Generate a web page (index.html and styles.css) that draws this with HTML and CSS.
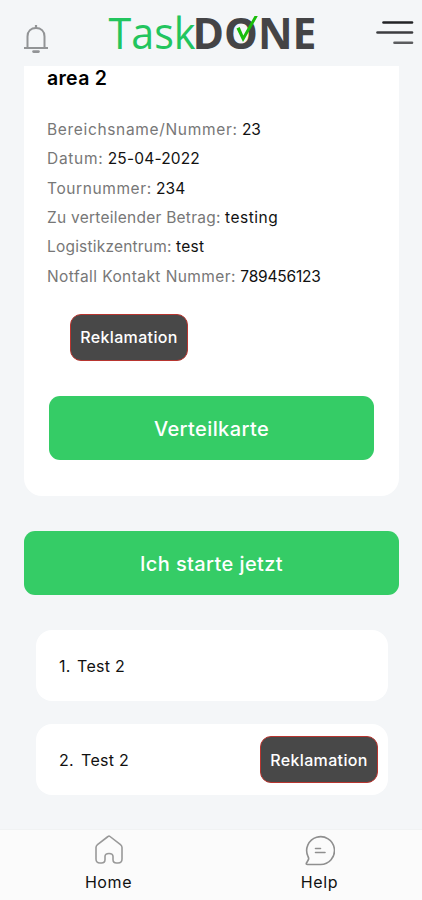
FILE: index.html
```html
<!DOCTYPE html>
<html lang="de">
<head>
  <meta charset="UTF-8" />
  <meta name="viewport" content="width=device-width, initial-scale=1.0">
  <title>TaskDONE</title>
  <link rel="stylesheet" href="styles.css">
</head>
<body>

  <header class="topbar">
    <svg class="bell" viewBox="0 0 26 30" fill="none" stroke="#929496" stroke-width="2">
      <path d="M4.500 23V12.500C4.500 7 8.200 4 13 4s8.500 3 8.500 8.500V23"/>
      <path d="M1 24h24M13 4V1" stroke-width="2.200"/>
      <path d="M10.500 27.600h5" stroke-width="2.600" stroke-linecap="round"/>
    </svg>
    <svg class="logo" viewBox="0 0 212 66">
      <text class="logo-task" x="0.500" y="48.500" textLength="87" lengthAdjust="spacingAndGlyphs">Task</text>
      <text class="logo-done" x="84.500" y="48.500" textLength="124" lengthAdjust="spacingAndGlyphs">DONE</text>
      <path d="M128.500 28.500l3.200-1.500 3.600 8.500L146.500 16h3.300L135 42z" fill="#19bd0b"/>
    </svg>
    <svg class="menu" viewBox="0 0 38 26" stroke-width="2.600" stroke-linecap="round">
      <path d="M7.500 2.500h28.500" stroke="#222326"/>
      <path d="M1.500 12.500h34.500" stroke="#3c3d40"/>
      <path d="M18.500 22.700h17.500" stroke="#5b5c5f"/>
    </svg>
  </header>

  <main>
    <section class="area-card">
      <h1>area 2</h1>
      <ul class="details">
        <li class="area"><span>Bereichsname/Nummer:</span> <b>23</b></li>
        <li class="date"><span>Datum:</span> <b>25-04-2022</b></li>
        <li class="tour"><span>Tournummer:</span> <b>234</b></li>
        <li class="amount"><span>Zu verteilender Betrag:</span> <b>testing</b></li>
        <li class="center"><span>Logistikzentrum:</span> <b>test</b></li>
        <li class="phone"><span>Notfall Kontakt Nummer:</span> <b>789456123</b></li>
      </ul>
      <button class="btn-dark">Reklamation</button>
      <button class="btn-green">Verteilkarte</button>
    </section>

    <button class="btn-green btn-start">Ich starte jetzt</button>

    <ol class="tours">
      <li><span class="num one">1.</span><span>Test 2</span></li>
      <li><span class="num">2.</span><span>Test 2</span><button class="btn-dark">Reklamation</button></li>
    </ol>
  </main>

  <nav class="tabbar">
    <a class="tab">
      <svg viewBox="0 0 30 32" fill="none" stroke="#999" stroke-width="1.600" stroke-linejoin="round">
        <path d="M14 2.500q1-.8 2 0l10.500 8.100q1.500 1.200 1.500 3V25q0 4-4 4h-1.500q-3.500 0-3.500-3.500v-3q0-3-4-3t-4 3v3Q11 29 7.500 29H6q-4 0-4-4V13.600q0-1.800 1.500-3z"/>
      </svg>
      <span>Home</span>
    </a>
    <a class="tab">
      <svg viewBox="0 0 30 32" fill="none" stroke="#8f8f8f" stroke-width="1.600" stroke-linecap="round" stroke-linejoin="round">
        <path d="M3 22.500A13.900 13.900 0 1 1 15.500 30.500H2.500q-1.800 0-1-1.500l2-3.500q.5-1.200-.5-3z"/>
        <path d="M10.500 14.500h5M10.500 18.500h9.500"/>
      </svg>
      <span>Help</span>
    </a>
  </nav>

</body>
</html>
```

FILE: styles.css
```css
* {
  box-sizing: border-box;
}
html, body {
  height: 100%;
  margin: 0;
  padding: 0;
}
body {
  display: flex;
  flex-direction: column;
  background: #f4f6f8;
  color: #111;
  font-family: Inter, "Open Sans", sans-serif;
  font-size: 15.500px;
  overflow: hidden;
}
h1, ul, ol {
  margin: 0;
  padding: 0;
}
ul, ol {
  list-style: none;
}
button {
  display: block;
  border: none;
  font-family: inherit;
  color: #fff;
  padding: 0;
}
.topbar {
  display: flex;
  flex: none;
  height: 66px;
  padding: 0 8px 0 23px;
}
.bell {
  width: 26px;
  height: 30px;
  margin-top: 24px;
}
.logo {
  width: 212px;
  height: 66px;
  margin-left: 59px;
}
.logo-task,
.logo-done {
  font-family: "Open Sans", "Noto Sans", sans-serif;
  font-size: 43px;
}
.logo-task {
  fill: #22c55e;
}
.logo-done {
  fill: #444446;
  font-weight: 700;
}
.menu {
  width: 38px;
  height: 26px;
  margin: 20px 0 0 auto;
}
main {
  flex: 1;
  padding: 0 23px 0 24px;
}
.area-card {
  height: 430px;
  padding: 0 25px 0 23px;
  background: #fff;
  border-radius: 0 0 18px 18px;
}
h1 {
  height: 49px;
  color: #000;
  font-size: 19.500px;
  line-height: 25px;
  font-weight: 600;
  letter-spacing: 0.3px;
}
.details li {
  height: 29.330px;
  line-height: 29.330px;
  color: #777;
  white-space: nowrap;
}
.details b {
  color: #111;
  font-weight: 400;
  letter-spacing: 0;
}
.area span {
  letter-spacing: 0.670px;
}
.date span {
  letter-spacing: 0.700px;
}
.date b {
  letter-spacing: 0.170px;
}
.tour span {
  letter-spacing: 0.600px;
}
.amount span {
  letter-spacing: 0.250px;
}
.amount b {
  letter-spacing: 0.500px;
}
.center span {
  letter-spacing: 0.200px;
}
.center b {
  letter-spacing: 0.300px;
}
.phone span {
  letter-spacing: 0.430px;
}
.phone b {
  letter-spacing: -0.200px;
}
.btn-dark {
  width: 118px;
  height: 47px;
  background: #484848;
  border: 1.500px solid #b8352f;
  border-radius: 11px;
  font-size: 16px;
  font-weight: 500;
  letter-spacing: 0.350px;
}
.area-card .btn-dark {
  margin: 23px 0 0 23px;
}
.btn-green {
  width: 100%;
  height: 64px;
  padding-top: 2px;
  background: #35cc66;
  border-radius: 11px;
  font-size: 20px;
  font-weight: 500;
  letter-spacing: 0.400px;
}
.area-card .btn-green {
  width: 325px;
  margin: 35px 0 0 2px;
}
.btn-start {
  margin-top: 35px;
}
.tours {
  display: grid;
  gap: 23px;
  padding: 35px 11px 0 12px;
}
.tours li {
  display: flex;
  align-items: center;
  height: 71px;
  padding: 0 10px 0 23px;
  background: #fff;
  border-radius: 16px;
  font-size: 16px;
  letter-spacing: 0.300px;
}
.num {
  width: 22px;
}
.num.one {
  width: 18px;
}
.tours .btn-dark {
  margin-left: auto;
}
.tabbar {
  display: grid;
  grid-template-columns: 1fr 1fr;
  flex: none;
  height: 71px;
  padding-top: 4px;
  background: #fbfbfb;
  border-top: 1px solid #f0f2f3;
}
.tab {
  display: flex;
  flex-direction: column;
  align-items: center;
  gap: 4px;
  padding-left: 6px;
  font-size: 16px;
  line-height: 24px;
  letter-spacing: 0.600px;
}
.tab svg {
  width: 30px;
  height: 32px;
}
```
